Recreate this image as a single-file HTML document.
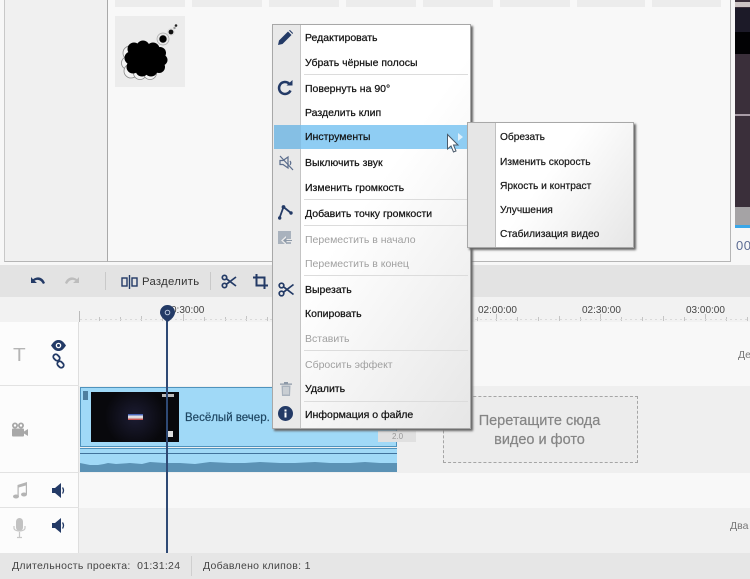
<!DOCTYPE html>
<html><head><meta charset="utf-8">
<style>
*{box-sizing:border-box}
html,body{margin:0;padding:0}
body{width:750px;height:579px;position:relative;overflow:hidden;background:#f7f7f7;font-family:"Liberation Sans","DejaVu Sans",sans-serif;color:#222}
#w{position:absolute;left:0;top:0;width:750px;height:579px;overflow:hidden;filter:blur(.3px)}
.a{position:absolute}
.t{position:absolute;white-space:nowrap;line-height:14px;font-size:10.5px}
.m{left:305px;color:#111;-webkit-text-stroke:.22px #111}
.d{color:#a0a0a0;-webkit-text-stroke:0}
.s{left:500px;font-size:10.2px;color:#1a1a1a;-webkit-text-stroke:.22px #1a1a1a}
.sep{position:absolute;left:304px;width:164px;height:1px;background:#dcdcdc}
.tab{position:absolute;top:0;height:7px;background:#ececec}
.time{position:absolute;top:304px;font-size:10px;color:#444;line-height:13px}
svg{position:absolute;overflow:visible}
</style></head><body><div id="w">

<!-- top panels -->
<div class="a" style="left:4px;top:0;width:104px;height:262px;background:#f0f0f0;border-left:1px solid #c8c8c8;border-right:1px solid #a9a9a9;border-bottom:1px solid #b5b5b5"></div>
<div class="a" style="left:108px;top:0;width:623px;height:262px;background:#f8f8f8;border-right:1px solid #b5b5b5;border-bottom:1px solid #b5b5b5"></div>
<div class="tab" style="left:115px;width:70px"></div>
<div class="tab" style="left:192px;width:70px"></div>
<div class="tab" style="left:269px;width:70px"></div>
<div class="tab" style="left:346px;width:70px"></div>
<div class="tab" style="left:423px;width:70px"></div>
<div class="tab" style="left:500px;width:70px"></div>
<div class="tab" style="left:577px;width:68px"></div>
<div class="tab" style="left:652px;width:69px"></div>

<!-- thumbnail -->
<div class="a" style="left:115px;top:16px;width:70px;height:71px;background:#ececec"></div>
<svg style="left:115px;top:16px" width="70" height="71" viewBox="0 0 70 71">
<g fill="#f4f4f4" stroke="#8a8a8a" stroke-width=".8"><circle cx="15" cy="37" r="7"/><circle cx="13" cy="47" r="6.500"/><circle cx="16" cy="55" r="7"/><circle cx="25" cy="57" r="6.500"/><circle cx="35" cy="57" r="6.500"/></g>
<g fill="#000"><circle cx="19" cy="33" r="6.500"/><circle cx="28" cy="31" r="6.500"/><circle cx="38" cy="33" r="6.500"/><circle cx="45" cy="37" r="6"/><circle cx="47" cy="44" r="5.500"/><circle cx="44" cy="51" r="6"/><circle cx="36" cy="54" r="6.500"/><circle cx="27" cy="54" r="6.500"/><circle cx="18" cy="51" r="6.500"/><circle cx="16" cy="42" r="6.500"/><rect x="18" y="32" width="26" height="20"/></g>
<circle cx="48" cy="23" r="6" fill="#e6e6e6" stroke="#aaa" stroke-width=".7"/><circle cx="48" cy="23" r="3.700" fill="#000"/>
<circle cx="56" cy="16" r="3.800" fill="#ddd"/><circle cx="56" cy="16" r="2.400" fill="#111"/>
<circle cx="59.500" cy="12" r="1.200" fill="#999"/><circle cx="61" cy="9.500" r="1.300" fill="#222"/>
</svg>

<!-- preview at right -->
<div class="a" style="left:735px;top:0;width:15px;height:225px;background:#3a2f3a"></div>
<div class="a" style="left:735px;top:2px;width:15px;height:5px;background:#ccc4c4"></div>
<div class="a" style="left:735px;top:8px;width:15px;height:24px;background:#1c1a28"></div>
<div class="a" style="left:735px;top:32px;width:15px;height:22px;background:#020204"></div>
<div class="a" style="left:735px;top:114px;width:15px;height:2px;background:#a89ca6"></div>
<div class="a" style="left:735px;top:207px;width:15px;height:18px;background:#a5a3a5"></div>
<div class="a" style="left:735px;top:225px;width:15px;height:3px;background:#3aa7e8"></div>
<div class="t" style="left:736px;top:239px;font-size:13px;color:#5d6c93;letter-spacing:.5px">00</div>

<!-- toolbar -->
<div class="a" style="left:0;top:265px;width:750px;height:32px;background:#e3e3e3"></div>
<svg style="left:28px;top:275px" width="20" height="14" viewBox="0 0 20 14"><path d="M3 2 L3 8 L9 8 L6.500 5.800 C9.500 3.800 13 5 15 9 L17 8 C15 2.500 10 .5 5 4.200Z" fill="#233a66"/></svg>
<svg style="left:62px;top:275px" width="20" height="14" viewBox="0 0 20 14"><path d="M17 2 L17 8 L11 8 L13.500 5.800 C10.500 3.800 7 5 5 9 L3 8 C5 2.500 10 .5 15 4.200Z" fill="#bdbdbd"/></svg>
<div class="a" style="left:105px;top:272px;width:1px;height:18px;background:#c9c9c9"></div>
<svg style="left:121px;top:274px" width="17" height="16" viewBox="0 0 17 16"><g fill="none" stroke="#233a66" stroke-width="1.400"><rect x="1" y="4" width="5" height="8"/><rect x="11" y="4" width="5" height="8"/><path d="M8.500 1V15"/></g></svg>
<div class="t" style="left:142px;top:275px;font-size:11.300px;color:#333;letter-spacing:.3px">Разделить</div>
<div class="a" style="left:210px;top:272px;width:1px;height:18px;background:#c9c9c9"></div>
<svg style="left:221px;top:274px" width="16" height="15" viewBox="0 0 16 15"><g fill="none" stroke="#233a66" stroke-width="1.700"><circle cx="3.500" cy="3.500" r="2.200"/><circle cx="3.500" cy="11.500" r="2.200"/><path d="M5.500 4.800 L15 12M5.500 10.200 L15 3"/></g></svg>
<svg style="left:253px;top:274px" width="15" height="15" viewBox="0 0 15 15"><path d="M3.500 0V11.500H15M0 3.500H11.500V15" fill="none" stroke="#233a66" stroke-width="2"/></svg>

<!-- ruler -->
<div class="a" style="left:0;top:297px;width:750px;height:25px;background:#f2f2f2"></div>
<svg style="left:0;top:297px" width="750" height="25" viewBox="0 0 750 25">
<path d="M79.500 14V25" stroke="#bbb"/>
<path d="M99.500 20V24M120.500 20V24M141.500 19V24M162.500 20V24M183.500 17V24M204.500 20V24M225.500 20V24M246.500 19V24M267.500 20V24M288.500 17V24M309.500 20V24M330.500 20V24M351.500 19V24M372.500 20V24M393.500 17V24M414.500 20V24M435.500 20V24M456.500 19V24M477.500 20V24M496.500 17V24M517.500 20V24M538.500 20V24M559.500 19V24M580.500 20V24M600.500 17V24M621.500 20V24M642.500 20V24M663.500 19V24M684.500 20V24M705.500 17V24M726.500 20V24M747.500 20V24" stroke="#c4c4c4"/>
<path d="M80 22.500H750" stroke="#dadada" stroke-dasharray="2 3"/>
</svg>
<div class="time" style="left:171px">0:30:00</div>
<div class="time" style="left:478px">02:00:00</div>
<div class="time" style="left:582px">02:30:00</div>
<div class="time" style="left:686px">03:00:00</div>

<!-- tracks -->
<div class="a" style="left:0;top:322px;width:750px;height:64px;background:#f8f8f8"></div>
<div class="a" style="left:0;top:386px;width:750px;height:87px;background:#efefef"></div>
<div class="a" style="left:0;top:473px;width:750px;height:35px;background:#f8f8f8"></div>
<div class="a" style="left:0;top:508px;width:750px;height:45px;background:#f0f0f0"></div>
<div class="a" style="left:0;top:322px;width:79px;height:231px;background:#fcfcfc;border-right:1px solid #dedede"></div>
<div class="a" style="left:0;top:385px;width:79px;height:1px;background:#e2e2e2"></div>
<div class="a" style="left:0;top:472px;width:79px;height:1px;background:#e2e2e2"></div>
<div class="a" style="left:0;top:507px;width:79px;height:1px;background:#e2e2e2"></div>

<div class="t" style="left:13px;top:345px;font-size:18px;line-height:20px;color:#b5b5b5;transform:scaleX(1.150);transform-origin:0 0">T</div>
<svg style="left:51px;top:340px" width="15" height="11" viewBox="0 0 15 11"><path d="M0 5.500C3 1 5 0 7.500 0S12 1 15 5.500C12 10 10 11 7.500 11S3 10 0 5.500Z" fill="#233a66"/><circle cx="7.500" cy="5.500" r="2.800" fill="#fff"/><circle cx="7.500" cy="5.500" r="1.500" fill="#233a66"/></svg>
<svg style="left:52px;top:354px" width="13" height="14" viewBox="0 0 13 14"><g fill="none" stroke="#233a66" stroke-width="1.800"><rect x="1" y="1" width="7" height="5" rx="2.500" transform="rotate(45 4.500 3.500)"/><rect x="5" y="8" width="7" height="5" rx="2.500" transform="rotate(45 8.500 10.500)"/></g></svg>
<svg style="left:11px;top:422px" width="17" height="15" viewBox="0 0 17 15"><g fill="#a8a8a8"><circle cx="4" cy="3.500" r="3"/><circle cx="10" cy="3.500" r="3"/><rect x="1" y="6.500" width="12" height="8" rx="1"/><path d="M13 9.500L17 7V14L13 11.500Z"/></g><circle cx="4" cy="3.500" r="1.200" fill="#fff"/><circle cx="10" cy="3.500" r="1.200" fill="#fff"/></svg>
<svg style="left:13px;top:482px" width="14" height="17" viewBox="0 0 14 17"><g fill="#b4b4b4"><ellipse cx="3" cy="14.500" rx="3" ry="2"/><ellipse cx="11" cy="12.500" rx="3" ry="2"/><path d="M4.500 14.500V3L14 0V12.500H12.800V3.500L5.700 5.500V14.500Z"/></g></svg>
<svg style="left:52px;top:483px" width="13" height="15" viewBox="0 0 13 15"><path d="M0 5H3L9 0V15L3 10H0Z" fill="#233a66"/><path d="M10.500 4.500Q12.500 7.500 10.500 10.500" stroke="#233a66" fill="none" stroke-width="1.300"/></svg>
<svg style="left:13px;top:518px" width="13" height="20" viewBox="0 0 13 20"><rect x="3" y="0" width="7" height="13" rx="3.500" fill="#c2c2c2"/><path d="M1 8V10C1 14 12 14 12 10V8M6.500 14V19M4 19.500H9" stroke="#c8c8c8" fill="none" stroke-width="1.200"/></svg>
<svg style="left:52px;top:518px" width="13" height="15" viewBox="0 0 13 15"><path d="M0 5H3L9 0V15L3 10H0Z" fill="#233a66"/><path d="M10.500 4.500Q12.500 7.500 10.500 10.500" stroke="#233a66" fill="none" stroke-width="1.300"/></svg>

<div class="t" style="left:738px;top:348px;font-size:10.500px;color:#777">Де</div>
<div class="t" style="left:730px;top:519px;font-size:10.500px;color:#777">Два</div>

<!-- clip -->
<div class="a" style="left:80px;top:387px;width:317px;height:60px;background:#a0d9f7;border:1px solid #4f93bd"></div>
<div class="a" style="left:80px;top:448px;width:317px;height:24px;background:#a0d9f7;border-top:1px solid #4f93bd"></div>
<div class="a" style="left:80px;top:453px;width:317px;height:1px;background:#41739c"></div>
<svg style="left:80px;top:454px" width="317" height="18" viewBox="0 0 317 18" preserveAspectRatio="none"><path d="M0 18V9L5 10 10 11 18 11 24 10 28 9 36 10 50 9 62 10 70 8 85 9 100 9 115 10 130 8 150 9 165 9 180 8 200 9 215 9 235 8 250 9 270 9 285 8 300 9 317 9V18Z" fill="#5b92b5"/></svg>
<div class="a" style="left:83px;top:391px;width:5px;height:9px;background:#4f7f9f"></div>
<div class="a" style="left:91px;top:392px;width:88px;height:50px;background:radial-gradient(circle at 50% 50%,#1c1c33,#08080c 60%)"></div>
<div class="a" style="left:128px;top:414px;width:15px;height:6px;background:linear-gradient(#2244aa,#eee 45%,#ddd 60%,#c03030)"></div>
<div class="a" style="left:162px;top:394px;width:12px;height:3px;background:#bbb"></div>
<div class="a" style="left:167px;top:431px;width:6px;height:6px;background:#ddd"></div>
<div class="t" style="left:185px;top:411px;font-size:11.500px;color:#1f4763;-webkit-text-stroke:.2px #1f4763">Весёлый вечер. А</div>
<div class="a" style="left:378px;top:431px;width:38px;height:11px;background:#e0e0e0"></div>
<div class="t" style="left:392px;top:430px;font-size:8px;color:#999">2.0</div>

<!-- drop target -->
<div class="a" style="left:443px;top:396px;width:195px;height:67px;background:#ececec;border:1px dashed #a5a5a5"></div>
<div class="a" style="left:442px;top:412px;width:195px;text-align:center;font-size:14.500px;line-height:18.500px;color:#858585;-webkit-text-stroke:.2px #858585">Перетащите сюда<br>видео и фото</div>

<!-- playhead -->
<div class="a" style="left:166px;top:312px;width:2px;height:241px;background:#2f4a75"></div>
<svg style="left:160px;top:305px" width="15" height="18" viewBox="0 0 15 18"><path d="M7.500 0A7.500 7.500 0 0 1 15 7.500C15 11 11 15 7.500 17 4 15 0 11 0 7.500A7.500 7.500 0 0 1 7.500 0Z" fill="#233a66"/><circle cx="7.500" cy="7.500" r="2.300" fill="none" stroke="#b9c6dc" stroke-width="1"/></svg>

<!-- status bar -->
<div class="a" style="left:0;top:553px;width:750px;height:26px;background:#e6e6e6"></div>
<div class="a" style="left:191px;top:556px;width:1px;height:20px;background:#cfcfcf"></div>
<div class="t" style="left:12px;top:559px;font-size:10.500px;color:#444;letter-spacing:.3px">Длительность проекта:&nbsp; 01:31:24</div>
<div class="t" style="left:203px;top:559px;font-size:10.500px;color:#444;letter-spacing:.3px">Добавлено клипов: 1</div>

<!-- context menu -->
<div class="a" style="left:272px;top:24px;width:199px;height:405px;background:linear-gradient(125deg,#fff 45%,#e6e6e6 100%);border:1px solid #a8a8a8;box-shadow:2px 2px 2px #666"></div>
<div class="a" style="left:273px;top:25px;width:28px;height:403px;background:#e9e9e9;border-right:1px solid #c4c4c4"></div>
<div class="a" style="left:274px;top:125px;width:195px;height:24px;background:#8fcdf3"></div>
<div class="a" style="left:274px;top:125px;width:27px;height:24px;background:#85bfe4"></div>
<div class="sep" style="top:74px"></div>
<div class="sep" style="top:199px"></div>
<div class="sep" style="top:225px"></div>
<div class="sep" style="top:275px"></div>
<div class="sep" style="top:350px"></div>
<div class="sep" style="top:401px"></div>

<div class="t m" style="top:31px">Редактировать</div>
<div class="t m" style="top:56px">Убрать чёрные полосы</div>
<div class="t m" style="top:82px">Повернуть на 90°</div>
<div class="t m" style="top:106px">Разделить клип</div>
<div class="t m" style="top:130px">Инструменты</div>
<div class="t m" style="top:156px">Выключить звук</div>
<div class="t m" style="top:181px">Изменить громкость</div>
<div class="t m" style="top:207px">Добавить точку громкости</div>
<div class="t m d" style="top:233px">Переместить в начало</div>
<div class="t m d" style="top:257px">Переместить в конец</div>
<div class="t m" style="top:283px">Вырезать</div>
<div class="t m" style="top:307px">Копировать</div>
<div class="t m d" style="top:332px">Вставить</div>
<div class="t m d" style="top:358px">Сбросить эффект</div>
<div class="t m" style="top:382px">Удалить</div>
<div class="t m" style="top:408px">Информация о файле</div>

<!-- menu icons -->
<svg style="left:278px;top:30px" width="15" height="15" viewBox="0 0 15 15"><path d="M0 15L1 10.500 10 1.500 13.500 5 4.500 14Z" fill="#233a66"/><path d="M11 .5L12 0 15 3 14.500 4Z" fill="#233a66"/></svg>
<svg style="left:278px;top:80px" width="15" height="15" viewBox="0 0 15 15"><path d="M12.500 10.500A6 6 0 1 1 11 3.500" fill="none" stroke="#233a66" stroke-width="2.500"/><path d="M8.500 5.500H14.500V0Z" fill="#233a66"/></svg>
<svg style="left:279px;top:155px" width="15" height="16" viewBox="0 0 15 16"><g fill="none" stroke="#5a6c8c" stroke-width="1.200"><path d="M1 5.500H4L9 2V13L4 9.500H1Z"/><path d="M1 1L14 15"/><path d="M11 6Q12.500 8 11 10"/></g></svg>
<svg style="left:278px;top:204px" width="15" height="16" viewBox="0 0 15 16"><path d="M1.500 14L5.500 3 13 9" fill="none" stroke="#233a66" stroke-width="1.800"/><circle cx="1.700" cy="14" r="1.700" fill="#233a66"/><circle cx="5.500" cy="3" r="1.900" fill="#233a66"/><circle cx="13" cy="9" r="1.700" fill="#233a66"/></svg>
<svg style="left:278px;top:231px" width="15" height="15" viewBox="0 0 15 15"><rect x="0" y="0" width="13" height="13" fill="#a9b2bd"/><path d="M3 9.500L8 5V8H15V11H8V14Z" fill="#e9e9e9"/><path d="M5 9.500L8.500 6.500V9H14V10H8.500V12.500Z" fill="#8d99a8"/></svg>
<svg style="left:278px;top:282px" width="16" height="15" viewBox="0 0 16 15"><g fill="none" stroke="#233a66" stroke-width="1.700"><circle cx="3.500" cy="3.500" r="2.300"/><circle cx="3.500" cy="11.500" r="2.300"/><path d="M5.500 4.800 L15.500 12.500M5.500 10.200 L15.500 2.500"/></g></svg>
<svg style="left:280px;top:381px" width="12" height="15" viewBox="0 0 12 15"><path d="M0 2.500H12V3.800H0ZM4 1H8V2.500H4Z" fill="#8d99a8"/><path d="M1.500 4.500H10.500L10 15H2Z" fill="#a9b2bd"/><path d="M4 6V13.500M6 6V13.500M8 6V13.500" stroke="#e9e9e9"/></svg>
<svg style="left:278px;top:406px" width="15" height="15" viewBox="0 0 15 15"><circle cx="7.500" cy="7.500" r="7.500" fill="#233a66"/><rect x="6.500" y="6.500" width="2" height="5" fill="#fff"/><rect x="6.500" y="3.500" width="2" height="2" fill="#fff"/></svg>

<!-- submenu arrow -->
<svg style="left:458px;top:133px" width="6" height="8" viewBox="0 0 6 8"><path d="M0 0L5 4 0 8Z" fill="#dff1fc"/></svg>

<!-- submenu -->
<div class="a" style="left:467px;top:122px;width:167px;height:126px;background:linear-gradient(125deg,#fff 45%,#e6e6e6 100%);border:1px solid #a8a8a8;box-shadow:2px 2px 2px #666"></div>
<div class="a" style="left:468px;top:123px;width:28px;height:124px;background:#e6e6e6;border-right:1px solid #c0c0c0"></div>
<div class="t s" style="top:131px">Обрезать</div>
<div class="t s" style="top:156px">Изменить скорость</div>
<div class="t s" style="top:180px">Яркость и контраст</div>
<div class="t s" style="top:204px">Улучшения</div>
<div class="t s" style="top:228px">Стабилизация видео</div>

<!-- cursor -->
<svg style="left:447px;top:134px" width="12" height="19" viewBox="0 0 12 19"><path d="M.5 .5V15L4 12 6.500 18 9 17 6.500 11H11Z" fill="#fff" stroke="#4a5a6a" stroke-width="1"/></svg>

</div></body></html>
